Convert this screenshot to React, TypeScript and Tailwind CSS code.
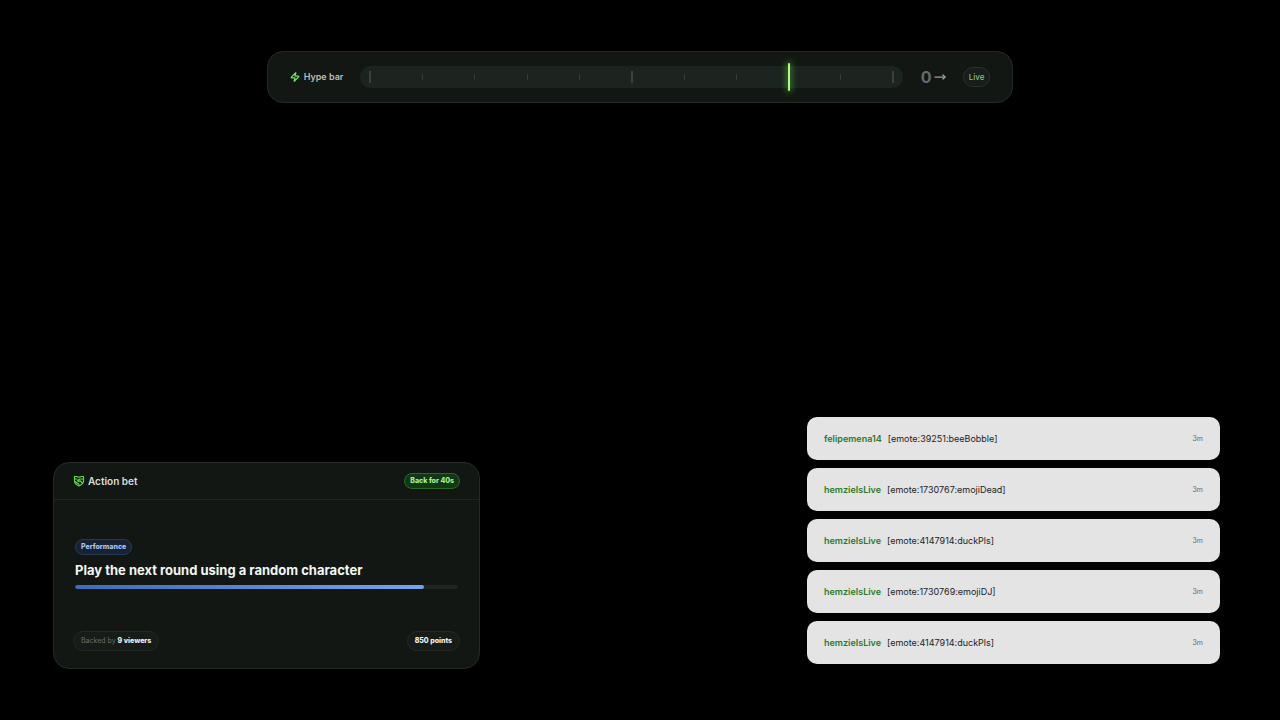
import React from "react";
import { MoveRight, Zap } from "lucide-react";

type Message = { user: string; text: string; time: string };

const messages: Message[] = [
  { user: "felipemena14", text: "[emote:39251:beeBobble]", time: "3m" },
  { user: "hemzieIsLive", text: "[emote:1730767:emojiDead]", time: "3m" },
  { user: "hemzieIsLive", text: "[emote:4147914:duckPls]", time: "3m" },
  { user: "hemzieIsLive", text: "[emote:1730769:emojiDJ]", time: "3m" },
  { user: "hemzieIsLive", text: "[emote:4147914:duckPls]", time: "3m" },
];

const ticks = Array.from({ length: 11 }, (_, i) => i);

function BetIcon() {
  return (
    <svg
      viewBox="0 0 24 24"
      className="size-3 shrink-0 text-[#5fe04a]"
      fill="none"
      stroke="currentColor"
      strokeWidth="2.2"
      strokeLinecap="round"
      strokeLinejoin="round"
      aria-hidden="true"
    >
      <path d="M3 3h4l5 1.5L17 3h4v10c0 3-2 4.500-4 6l-5 3-5-3c-2-1.500-4-3-4-6z" />
      <path d="M20 8h-6.500L9 11c1 2.500 3.500 2 5 .5l5 4.500" />
      <path d="M4 13l8 5.500M4 8h4" />
    </svg>
  );
}

function HypeBar() {
  return (
    <header className="mx-auto flex w-7/12 items-center rounded-2xl border border-[#242a25] bg-[#121713] px-[22px] py-[14px]">
      <div className="flex items-center gap-1 text-[#b9beb9]">
        <Zap className="size-2.5 text-[#6fe85a]" strokeWidth={3} aria-hidden="true" />
        <h2 className="text-[9px] leading-3 font-semibold">Hype bar</h2>
      </div>
      <div className="relative ml-[17px] flex h-[22px] flex-1 items-center justify-between rounded-full bg-[#1c2420] px-[9px]">
        {ticks.map((i) => (
          <span
            key={i}
            className={i % 5 === 0 ? "h-3 w-0.5 bg-[#39423c]" : "h-1.5 w-px bg-[#343d37]"}
          />
        ))}
        <span className="absolute top-1/2 left-[79%] h-7 w-0.5 -translate-x-1/2 -translate-y-1/2 rounded-full bg-[#b4f58c] shadow-[0_0_6px_1px_#3f9a2c]" />
      </div>
      <div className="ml-[18px] flex items-center gap-0.5 text-[#626b70]">
        <span className="text-base leading-5 font-bold">0</span>
        <MoveRight className="size-3 text-[#9ca3a0]" strokeWidth={2.5} aria-hidden="true" />
      </div>
      <span className="ml-[17px] rounded-full border border-[#2a322b] bg-[#171d18] px-[5px] py-[3px] text-[8px] leading-3 font-medium text-[#8fbb84]">
        Live
      </span>
    </header>
  );
}

function ActionBet() {
  return (
    <section className="flex h-[207px] w-[36.6%] flex-col rounded-2xl border border-[#242a25] bg-[#121713]">
      <div className="flex items-center justify-between border-b border-[#202721] px-[19px] py-[10px]">
        <div className="flex items-center gap-[3px]">
          <BetIcon />
          <h2 className="text-[10px] leading-4 font-semibold text-[#d9ddd9]">Action bet</h2>
        </div>
        <span className="rounded-full border border-[#256b25] bg-[#123715] px-[5px] py-px text-[7px] leading-3 font-extrabold text-[#a0f58c]">
          Back for 40s
        </span>
      </div>
      <div className="flex flex-1 flex-col items-start justify-center px-[21px] pb-[3px]">
        <span className="rounded-full border border-[#263a55] bg-[#182234] px-[5px] py-px text-[7px] leading-3 font-extrabold text-[#a9c2f2]">
          Performance
        </span>
        <h1 className="mt-[3px] text-[13px] leading-6 font-bold text-[#f4f7f4]">
          Play the next round using a random character
        </h1>
        <div className="mt-[3px] h-1 w-full overflow-hidden rounded-full bg-[#202522]">
          <div className="h-full w-[91%] rounded-full bg-linear-to-r from-[#3a6cb8] to-[#75a3f0]" />
        </div>
      </div>
      <div className="flex items-center justify-between px-[19px] pb-[17px] text-[7px] leading-3">
        <span className="rounded-full border border-[#222923] bg-[#171c18] px-[7px] py-[3px] text-[#68706a]">
          Backed by <b className="font-extrabold text-[#f0f3f0]">9 viewers</b>
        </span>
        <span className="rounded-full border border-[#222923] bg-[#171c18] px-[7px] py-[3px] font-extrabold text-[#f0f3f0]">
          850 points
        </span>
      </div>
    </section>
  );
}

function Chat() {
  return (
    <ul className="mb-[5px] flex w-[413px] flex-col gap-2">
      {messages.map((m, i) => (
        <li
          key={i}
          className="flex h-[43px] items-center rounded-[10px] bg-[#e4e4e4] px-[17px] text-[9px] leading-3"
        >
          <span className="font-semibold text-[#2a7a2a]">{m.user}</span>
          <span className="ml-1.5 flex-1 text-[#1c1c1c]">{m.text}</span>
          <time className="text-[7px] text-[#666666]">{m.time}</time>
        </li>
      ))}
    </ul>
  );
}

export default function App() {
  return (
    <main className="flex min-h-screen flex-col justify-between bg-black py-[51px] font-['Inter',sans-serif]">
      <HypeBar />
      <div className="flex items-end justify-between pr-[60px] pl-[53px]">
        <ActionBet />
        <Chat />
      </div>
    </main>
  );
}
